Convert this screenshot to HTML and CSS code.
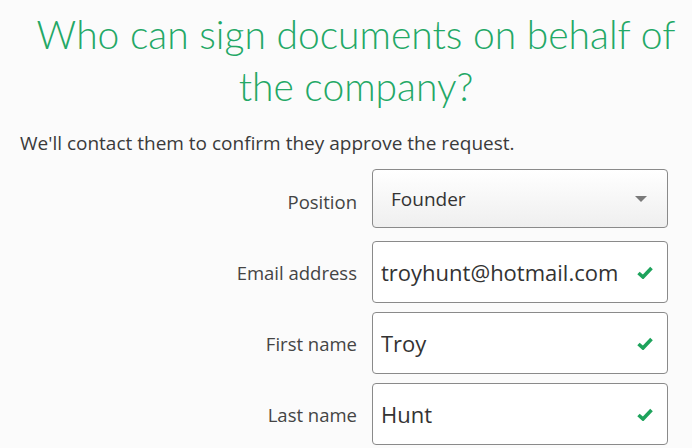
FILE: index.html
```html
<!DOCTYPE html>
<html lang="en">
<head>
    <meta charset="UTF-8">
    <meta name="viewport" content="width=device-width, initial-scale=1.0">
    <title>Signatory details</title>
    <link rel="stylesheet" href="styles.css">
</head>
<body>
    <h1 class="title">Who can sign documents on behalf of the company?</h1>
    <p class="intro">We'll contact them to confirm they approve the request.</p>

    <form class="signatory-form">
        <label class="field-label field-label-select" for="position">Position</label>
        <div class="select-box" id="position">
            <span>Founder</span>
            <span class="caret"></span>
        </div>

        <label class="field-label" for="email">Email address</label>
        <div class="input-box">
            <input type="email" id="email" value="troyhunt@hotmail.com">
            <svg class="tick" viewBox="0 0 16 13" width="16" height="13"><path d="M1.5 7 L6 11 L14.5 2" fill="none" stroke="#1ea35c" stroke-width="3.6"/></svg>
        </div>

        <label class="field-label" for="firstName">First name</label>
        <div class="input-box">
            <input type="text" id="firstName" value="Troy">
            <svg class="tick" viewBox="0 0 16 13" width="16" height="13"><path d="M1.5 7 L6 11 L14.5 2" fill="none" stroke="#1ea35c" stroke-width="3.6"/></svg>
        </div>

        <label class="field-label" for="lastName">Last name</label>
        <div class="input-box">
            <input type="text" id="lastName" value="Hunt">
            <svg class="tick" viewBox="0 0 16 13" width="16" height="13"><path d="M1.5 7 L6 11 L14.5 2" fill="none" stroke="#1ea35c" stroke-width="3.6"/></svg>
        </div>
    </form>
</body>
</html>
```

FILE: styles.css
```css
body {
    margin: 0;
    padding: 0 24px 0 20px;
    background-color: #fbfbfb;
    font-family: "Open Sans", "Noto Sans", sans-serif;
    color: #333;
}
.title {
    margin: 8px -24px 0 0;
    text-align: center;
    font-family: Lato, "Open Sans", sans-serif;
    font-size: 39px;
    font-weight: 300;
    line-height: 52px;
    color: #23a866;
}
.intro {
    margin: 18px 0 13px;
    font-size: 19px;
    line-height: 26px;
    color: #3a3a3a;
}
.signatory-form {
    display: grid;
    grid-template-columns: 1fr 296px;
    column-gap: 15px;
    row-gap: 9px;
    align-items: center;
}
.field-label {
    text-align: right;
    font-size: 18.5px;
    color: #444;
}
.field-label-select {
    padding-top: 2px;
}
.select-box {
    display: flex;
    align-items: center;
    justify-content: space-between;
    height: 57px;
    margin-bottom: 4px;
    padding: 0 20px 0 18px;
    border: 1px solid #8a8a8a;
    border-radius: 4px;
    background: linear-gradient(#ffffff, #efefef);
    font-size: 19px;
    color: #333;
}
.caret {
    width: 0;
    height: 0;
    border-left: 6px solid transparent;
    border-right: 6px solid transparent;
    border-top: 6px solid #7a7a7a;
}
.input-box {
    display: flex;
    align-items: center;
    height: 60px;
    padding: 0 14px 0 8px;
    border: 1px solid #8a8a8a;
    border-radius: 4px;
    background-color: #fff;
}
.input-box input {
    flex: 1;
    min-width: 0;
    border: none;
    outline: none;
    padding: 0;
    background: transparent;
    font-family: inherit;
    font-size: 22px;
    color: #333;
}
.tick {
    flex: none;
}
```
